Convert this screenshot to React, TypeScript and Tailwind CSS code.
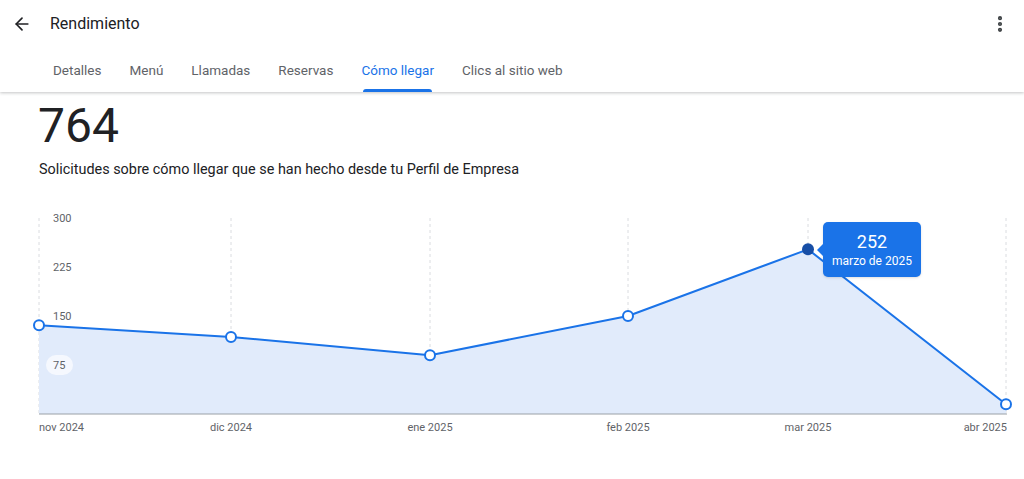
import { ArrowLeft, MoreVertical } from 'lucide-react';

const TABS = ['Detalles', 'Menú', 'Llamadas', 'Reservas', 'Cómo llegar', 'Clics al sitio web'];
const ACTIVE = 'Cómo llegar';

// Chart geometry (px within svg)
const W = 1024;
const H = 250;
const TOP = 10;
const BASE = 206; // y of value 0
const PX_PER_UNIT = 49 / 75;

const POINTS = [
  { x: 39, v: 136, label: 'nov 2024', anchor: 'start' },
  { x: 231, v: 118, label: 'dic 2024', anchor: 'middle' },
  { x: 430, v: 90, label: 'ene 2025', anchor: 'middle' },
  { x: 628, v: 150, label: 'feb 2025', anchor: 'middle' },
  { x: 808, v: 252, label: 'mar 2025', anchor: 'middle' },
  { x: 1006, v: 15, label: 'abr 2025', anchor: 'end' },
] as const;

const yOf = (v: number) => BASE - v * PX_PER_UNIT;

function Chart() {
  const line = POINTS.map((p) => `${p.x},${yOf(p.v)}`).join(' ');
  const area = `39,${BASE} ${line} 1006,${BASE}`;
  return (
    <div className="relative h-[250px]">
      <svg width={W} height={H} className="block" style={{ fontFamily: 'Roboto, sans-serif' }}>
        {POINTS.map((p) => (
          <line key={p.x} x1={p.x} x2={p.x} y1={TOP} y2={BASE} stroke="#dadce0" strokeDasharray="3 3" />
        ))}
        <polygon points={area} fill="#e1ebfb" />
        <line x1={39} x2={1007} y1={BASE} y2={BASE} stroke="#9aa0a6" strokeWidth={1} />
        {[300, 225, 150].map((v) => (
          <text key={v} x={53} y={yOf(v) + 4} fontSize={11} fill="#5f6368">
            {v}
          </text>
        ))}
        <rect x={46} y={yOf(75) - 10} width={27} height={20} rx={10} fill="#f5f8fe" />
        <text x={53} y={yOf(75) + 4} fontSize={11} fill="#5f6368">
          75
        </text>
        <polyline points={line} fill="none" stroke="#1a73e8" strokeWidth={2} strokeLinejoin="round" />
        {POINTS.map((p) =>
          p.v === 252 ? (
            <circle key={p.x} cx={p.x} cy={yOf(p.v)} r={6} fill="#174ea6" />
          ) : (
            <circle key={p.x} cx={p.x} cy={yOf(p.v)} r={5} fill="#fff" stroke="#1a73e8" strokeWidth={2} />
          )
        )}
        {POINTS.map((p) => (
          <text key={p.label} x={p.anchor === 'end' ? 1007 : p.x} y={223} fontSize={11} fill="#5f6368" textAnchor={p.anchor}>
            {p.label}
          </text>
        ))}
      </svg>
      <div className="absolute left-[823px] top-[14px] w-[98px] h-[55px] rounded-[5px] bg-[#1a73e8] text-white flex flex-col items-center justify-center shadow-sm">
        <div className="absolute left-[-6px] top-[22px] w-0 h-0 border-y-[6px] border-y-transparent border-r-[6px] border-r-[#1a73e8]" />
        <span className="text-[18px] leading-[22px]">252</span>
        <span className="text-[12px] leading-[16px]">marzo de 2025</span>
      </div>
    </div>
  );
}

export default function App() {
  return (
    <div className="w-[1024px] h-[479px] bg-white overflow-hidden text-[#202124]" style={{ fontFamily: 'Roboto, "Noto Sans", sans-serif' }}>
      <header className="shadow-[0_1px_3px_rgba(60,64,67,0.3)] relative z-10">
        <div className="h-[48px] flex items-center pl-[12px] pr-[14px]">
          <button className="w-[20px] h-[20px] flex items-center justify-center text-[#202124]">
            <ArrowLeft size={20} strokeWidth={2} />
          </button>
          <h1 className="ml-[18px] text-[16px] text-[#202124]">Rendimiento</h1>
          <button className="ml-auto text-[#3c4043]">
            <MoreVertical size={20} strokeWidth={3} />
          </button>
        </div>
        <nav className="h-[44px] flex pl-[39px]">
          {TABS.map((t) => (
            <div
              key={t}
              className={`px-[14px] flex items-center text-[13.5px] ${t === ACTIVE ? 'text-[#1a73e8]' : 'text-[#5f6368]'}`}
            >
              <span className="relative h-full flex items-center">
                {t}
                {t === ACTIVE && <span className="absolute left-[2px] right-[2px] bottom-0 h-[3px] rounded-t-[3px] bg-[#1a73e8]" />}
              </span>
            </div>
          ))}
        </nav>
      </header>
      <main>
        <div className="pl-[38px] pt-[7px] text-[48px] leading-[54px] text-[#202124]">764</div>
        <p className="pl-[39px] mt-[7px] text-[14.4px] leading-[20px] text-[#202124]">
          Solicitudes sobre cómo llegar que se han hecho desde tu Perfil de Empresa
        </p>
        <div className="mt-[28px]">
          <Chart />
        </div>
      </main>
    </div>
  );
}
